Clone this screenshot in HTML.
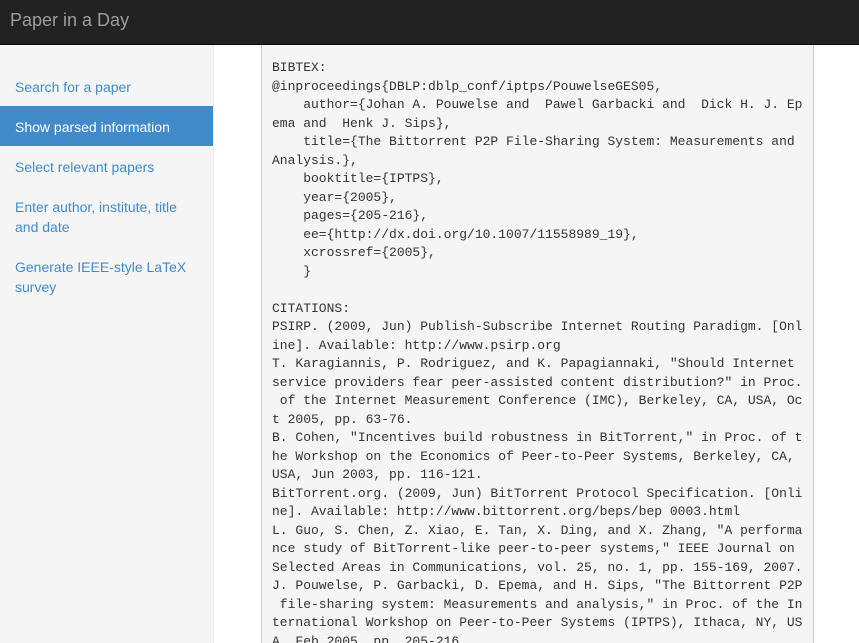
<!DOCTYPE html>
<html style="overflow:hidden;height:643px"><head><style>
body{margin:0;width:859px;height:643px;overflow:hidden;background:#fff;font-family:"Liberation Sans",sans-serif;position:relative}
.nav{position:absolute;left:0;top:0;width:859px;height:44px;background:#222;border-bottom:1px solid #080808}
.brand{position:absolute;left:10px;top:10px;font-size:18px;color:#9d9d9d}
.side{position:absolute;left:0;top:45px;width:213px;height:598px;background:#f5f5f5;border-right:1px solid #eee}
.side a{position:absolute;left:15px;font-size:14px;color:#428bca;line-height:20px;text-decoration:none}
.act{position:absolute;left:0;top:61px;width:213px;height:40px;background:#428bca}
pre{position:absolute;left:261px;top:45px;width:553px;height:598px;overflow:hidden;margin:0;background:#f5f5f5;border:1px solid #ccc;border-top:none;border-bottom:none;box-sizing:border-box;padding:14px 0 0 10px;font-family:"Liberation Mono",monospace;font-size:13px;line-height:18.52px;color:#333}
</style></head><body>
<div class="nav"><div class="brand">Paper in a Day</div></div>
<div class="side">
<a style="top:32px">Search for a paper</a>
<div class="act"></div>
<a style="top:72px;color:#fff">Show parsed information</a>
<a style="top:112px">Select relevant papers</a>
<a style="top:152px">Enter author, institute, title<br>and date</a>
<a style="top:212px">Generate IEEE-style LaTeX<br>survey</a>
</div>
<pre>BIBTEX:
@inproceedings{DBLP:dblp_conf/iptps/PouwelseGES05,
    author={Johan A. Pouwelse and  Pawel Garbacki and  Dick H. J. Ep
ema and  Henk J. Sips},
    title={The Bittorrent P2P File-Sharing System: Measurements and
Analysis.},
    booktitle={IPTPS},
    year={2005},
    pages={205-216},
    ee={http://dx.doi.org/10.1007/11558989_19},
    xcrossref={2005},
    }

CITATIONS:
PSIRP. (2009, Jun) Publish-Subscribe Internet Routing Paradigm. [Onl
ine]. Available: http://www.psirp.org
T. Karagiannis, P. Rodriguez, and K. Papagiannaki, "Should Internet
service providers fear peer-assisted content distribution?" in Proc.
 of the Internet Measurement Conference (IMC), Berkeley, CA, USA, Oc
t 2005, pp. 63-76.
B. Cohen, "Incentives build robustness in BitTorrent," in Proc. of t
he Workshop on the Economics of Peer-to-Peer Systems, Berkeley, CA,
USA, Jun 2003, pp. 116-121.
BitTorrent.org. (2009, Jun) BitTorrent Protocol Specification. [Onli
ne]. Available: http://www.bittorrent.org/beps/bep 0003.html
L. Guo, S. Chen, Z. Xiao, E. Tan, X. Ding, and X. Zhang, "A performa
nce study of BitTorrent-like peer-to-peer systems," IEEE Journal on
Selected Areas in Communications, vol. 25, no. 1, pp. 155-169, 2007.
J. Pouwelse, P. Garbacki, D. Epema, and H. Sips, "The Bittorrent P2P
 file-sharing system: Measurements and analysis," in Proc. of the In
ternational Workshop on Peer-to-Peer Systems (IPTPS), Ithaca, NY, US
A, Feb 2005, pp. 205-216.</pre>
</body></html>
